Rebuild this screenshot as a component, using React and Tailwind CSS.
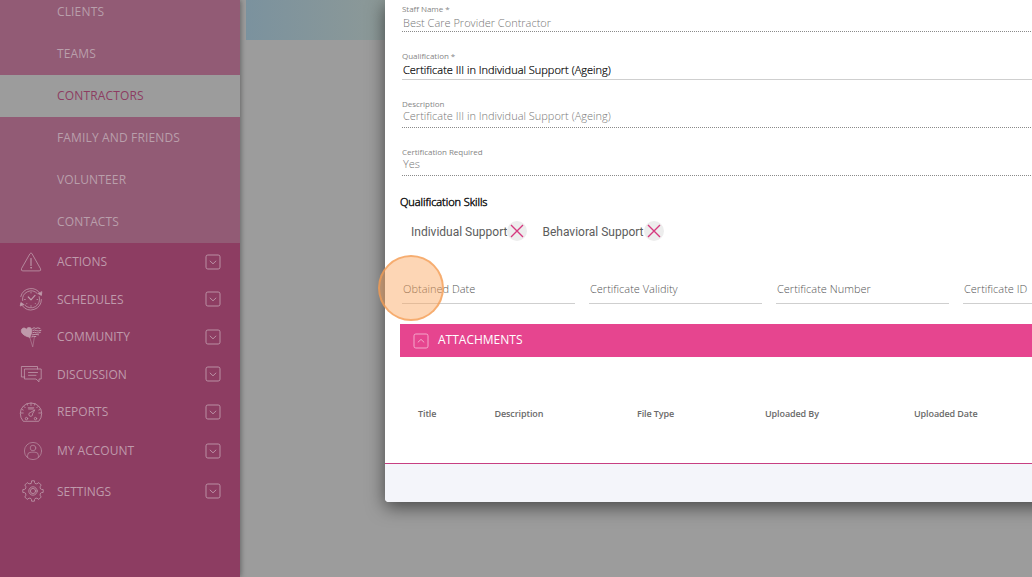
const subItems = ["CLIENTS", "TEAMS", "CONTRACTORS", "FAMILY AND FRIENDS", "VOLUNTEER", "CONTACTS"];

const menuItems = [
  { label: "ACTIONS", icon: ActionsIcon, height: "h-[37px]" },
  { label: "SCHEDULES", icon: SchedulesIcon, height: "h-[38px]", text: "pt-[2px]" },
  { label: "COMMUNITY", icon: CommunityIcon, height: "h-[37px]" },
  { label: "DISCUSSION", icon: DiscussionIcon, height: "h-[38px]", text: "pt-[2px]" },
  { label: "REPORTS", icon: ReportsIcon, height: "h-[37px]" },
  { label: "MY ACCOUNT", icon: AccountIcon, height: "h-[41px]" },
  { label: "SETTINGS", icon: SettingsIcon, height: "h-[40px]", text: "pt-[2px]" },
];

function Icon({ children, className = "" }) {
  return (
    <svg
      width="24"
      height="24"
      viewBox="0 0 24 24"
      fill="none"
      stroke="currentColor"
      strokeWidth="0.8"
      strokeLinecap="round"
      strokeLinejoin="round"
      className={className}
    >
      {children}
    </svg>
  );
}

function ActionsIcon() {
  return (
    <Icon>
      <path d="M11.1 3.5Q12 2.2 12.9 3.5L21.6 18.9Q22.3 20.8 20.2 20.9H3.8Q1.7 20.8 2.4 18.9Z" />
      <path d="M12 8.5V15.5" strokeWidth="1.1" />
      <circle cx="12" cy="17.8" r="0.4" fill="currentColor" />
    </Icon>
  );
}

function SchedulesIcon() {
  return (
    <Icon>
      <path d="M1.8 9.5A10.6 10.6 0 0 1 21.2 6.8M22.4 12.5A10.6 10.6 0 0 1 3.4 18.8" />
      <path d="M19.4 6.8L22.4 8.4L22.8 5ZM1.3 18.6L1.9 15.6L4.7 17.4Z" fill="currentColor" />
      <path d="M3.6 13.5A8.6 8.6 0 0 1 18.4 6.6M20.2 9.6A8.6 8.6 0 0 1 5.8 18.2" />
      <path d="M9.3 10L12 12.8L16 8.4" strokeWidth="1.2" />
      <path d="M12 5.2V6M12 18.6V19.4M5.5 12.5H6.3M18 12.5H18.8M7.3 17L7.9 16.4M16.8 17L16.2 16.4" />
    </Icon>
  );
}

function CommunityIcon() {
  return (
    <Icon>
      <path
        d="M10.8 12.3C6.5 11.4 2.4 9 2.3 5.9C2.2 3 5.6 2 7.3 4.3C8.8 1.5 12.8 2 12.8 5.2C12.8 7.8 12 10.2 10.8 12.3Z"
        fill="currentColor"
      />
      <g strokeWidth="1">
        <path d="M13.6 3.3Q15.3 2 16.8 3.5Q18.5 2.2 21 3.4" />
        <path d="M14 5.4Q15.7 4.5 17.2 5.6Q19.4 6.5 22 5.4" />
        <path d="M13.8 7.6Q15.5 6.7 17.2 7.8Q19.2 8.5 21.4 7.4" />
        <path d="M13.3 9.8Q15.8 8.8 19.6 9.8" />
        <path d="M12.8 11.8Q14.5 11 16.8 11.5" />
      </g>
      <path d="M10.8 12.4L13.6 21.5M15.4 12L13.8 21.5" strokeWidth="0.5" />
    </Icon>
  );
}

function DiscussionIcon() {
  return (
    <Icon>
      <path d="M5.8 15H2.4V4.5H18.5V7" />
      <path d="M5.8 7H22.2V17H20V19.8L17 17H5.8Z" />
      <path d="M9.5 10.5H18.5M9.5 13.3H17" />
    </Icon>
  );
}

function ReportsIcon() {
  return (
    <Icon>
      <path d="M4 21Q1.3 18 1.3 13.3A10.7 10.3 0 0 1 22.7 13.3Q22.7 18 20 21Z" />
      <path d="M12 3V5.5M5 6.5L6.2 7.7M19 6.5L17.8 7.7M1.8 13H4.2M22.2 13H19.8M9.2 7.8H14.8M9.6 9H14.4M8 3.9L8.6 5.2M16 3.9L15.4 5.2M2.9 9.4L4.2 10M21.1 9.4L19.8 10" />
      <path d="M15.5 10L11.3 12.6A1.9 1.9 0 1 0 13.6 14.2Z" />
      <circle cx="7.5" cy="18.6" r="1.2" />
      <circle cx="16.5" cy="18.6" r="1.2" />
    </Icon>
  );
}

function AccountIcon() {
  return (
    <Icon className="ml-[2px] opacity-80">
      <circle cx="12" cy="12" r="8.6" />
      <circle cx="12" cy="9" r="2.8" />
      <path d="M6.6 18.4V16.3Q6.6 13.2 10 13.2H14Q17.4 13.2 17.4 16.3V18.4" />
    </Icon>
  );
}

function SettingsIcon() {
  return (
    <Icon className="ml-[2px]">
      <path d="M10 4.4Q10.6 4 10.6 1.8H13.4Q13.4 4 14 4.4Q15.5 5 16 4.8L17.8 3.6L20.2 6L19.1 7.8Q19 9 19.7 10Q20.2 10.6 22.2 10.6V13.4Q20.2 13.4 19.7 14Q19 15.2 19.1 16.2L20.2 18L17.8 20.4L16 19.2Q15.2 19 14 19.6Q13.4 20 13.4 22.2H10.6Q10.6 20 10 19.6Q8.8 19 8 19.2L6.2 20.4L3.8 18L4.9 16.2Q5 15 4.3 14Q3.8 13.4 1.8 13.4V10.6Q3.8 10.6 4.3 10Q5 8.8 4.9 7.8L3.8 6L6.2 3.6L8 4.8Q9 5 10 4.4Z" />
      <circle cx="12" cy="12" r="4.2" />
      <circle cx="12" cy="12" r="2.6" />
    </Icon>
  );
}

function BoxedChevron({ up = false, className = "" }) {
  return (
    <svg width="16" height="16" viewBox="0 0 16 16" fill="none" stroke="currentColor" strokeWidth="0.9" className={className}>
      <rect x="1" y="1" width="14" height="14" rx="1.8" />
      <path d={up ? "M4.8 9.4L8 6.4L11.2 9.4" : "M4.8 6.8L8 9.8L11.2 6.8"} />
    </svg>
  );
}

function Sidebar() {
  return (
    <aside className="relative z-10 h-full w-[240px] shrink-0 bg-[#8d3d62] text-[12px] text-[#bf9aab] shadow-[1px_0_5px_rgba(0,0,0,0.35)]">
      <ul className="-mt-[9px] bg-[#925b75] tracking-[0.15px] text-[#b99fab]">
        {subItems.map((item) => (
          <li
            key={item}
            className={`flex h-[42px] items-center pl-[57px] ${item === "CONTRACTORS" ? "bg-[#9c9c9c] text-[#8d3d62]" : ""}`}
          >
            {item}
          </li>
        ))}
      </ul>
      <ul>
        {menuItems.map(({ label, icon: ItemIcon, height, text = "" }) => (
          <li key={label} className={`flex items-center pr-[19px] pl-[19px] ${height}`}>
            <span className="w-[38px] shrink-0">
              <ItemIcon />
            </span>
            <span className={`flex-1 ${text}`}>{label}</span>
            <BoxedChevron />
          </li>
        ))}
      </ul>
    </aside>
  );
}

/* Read only fields get the dotted underline */
function Field({ label, value, disabled = true, className = "", valueClass = "" }) {
  return (
    <div
      className={`ml-[17px] border-b ${disabled ? "border-dotted border-[#8a8a8a] text-[#777]" : "border-[#cfcfcf] text-black"} ${className}`}
    >
      <div className="text-[8px] leading-[12px] tracking-[-0.03px] text-[#858585]">{label}</div>
      <div className={`pl-[1px] text-[11px] font-light ${valueClass}`}>{value}</div>
    </div>
  );
}

function Skill({ name }) {
  return (
    <div className="flex items-center font-[Roboto] text-[12px] text-[#5c5c5c]">
      <span className="pt-[2px]">{name}</span>
      <span className="flex size-[20px] items-center justify-center rounded-full bg-[#ededed]">
        <svg width="14" height="14" viewBox="0 0 14 14" stroke="#d6397f" strokeWidth="1.4">
          <path d="M1 1L13 13M13 1L1 13" />
        </svg>
      </span>
    </div>
  );
}

function QualificationModal() {
  return (
    <div className="absolute top-0 left-[385px] z-20 flex h-[502px] w-[680px] flex-col rounded-b-[4px] bg-white shadow-[0_5px_18px_rgba(0,0,0,0.55)]">
      <Field label="Staff Name *" value="Best Care Provider Contractor" className="mt-[3px] h-[29px]" valueClass="leading-[16px]" />
      <Field
        label="Qualification *"
        value="Certificate III in Individual Support (Ageing)"
        disabled={false}
        className="mt-[18px] h-[30px]"
        valueClass="leading-[16px] [-webkit-text-stroke:0.2px_black]"
      />
      <Field label="Description" value="Certificate III in Individual Support (Ageing)" className="mt-[18px] h-[30px]" valueClass="leading-[12px]" />
      <Field label="Certification Required" value="Yes" className="mt-[18px] h-[30px]" valueClass="leading-[12px]" />

      <h3 className="mt-[18px] ml-[15px] text-[11px] leading-[16px] font-light tracking-[-0.05px] text-[#222] [-webkit-text-stroke:0.5px_#222]">
        Qualification Skills
      </h3>
      <div className="mt-[11px] ml-[26px] flex gap-[15px]">
        <Skill name="Individual Support" />
        <Skill name="Behavioral Support" />
      </div>

      <div className="mt-[39px] ml-[17px] flex gap-[14px] text-[11px] font-light text-[#555]">
        {["Obtained Date", "Certificate Validity", "Certificate Number", "Certificate ID"].map((name) => (
          <div key={name} className="h-[24px] w-[173px] shrink-0 border-b border-[#cfcfcf] pl-[1px] leading-[18px]">
            {name}
          </div>
        ))}
      </div>

      <div className="mt-[20px] ml-[15px] flex h-[33px] shrink-0 items-center bg-[#e6458f] pl-[13px] text-[12px] text-white">
        <BoxedChevron up className="mr-[9px] text-[#f6b3d2]" />
        <span className="pb-[2px]">ATTACHMENTS</span>
      </div>
      <div className="mt-[49px] ml-[33px] flex text-[9px] leading-[16px] font-semibold tracking-[-0.1px] text-[#6a6a6a]">
        <span className="w-[76.5px]">Title</span>
        <span className="w-[142.5px]">Description</span>
        <span className="w-[128px]">File Type</span>
        <span className="w-[149px]">Uploaded By</span>
        <span>Uploaded Date</span>
      </div>

      <div className="mt-auto h-[39px] rounded-b-[4px] border-t border-[#c73f82] bg-[#f4f5fa]" />
    </div>
  );
}

export default function App() {
  return (
    <div className="relative flex h-[577px] w-[1032px] overflow-hidden bg-[#9c9c9c] font-['Open_Sans',sans-serif]">
      <Sidebar />
      <main className="flex-1 pl-[6px]">
        <div className="h-[40px] bg-gradient-to-r from-[#7b929e] to-[#8d9997] to-[140px]" />
      </main>
      <QualificationModal />
      {/* Click highlight */}
      <div className="absolute top-[255px] left-[378px] z-30 size-[66px] rounded-full border-[2.5px] border-[#f49b52]/70 bg-[#fba35b]/45" />
    </div>
  );
}
